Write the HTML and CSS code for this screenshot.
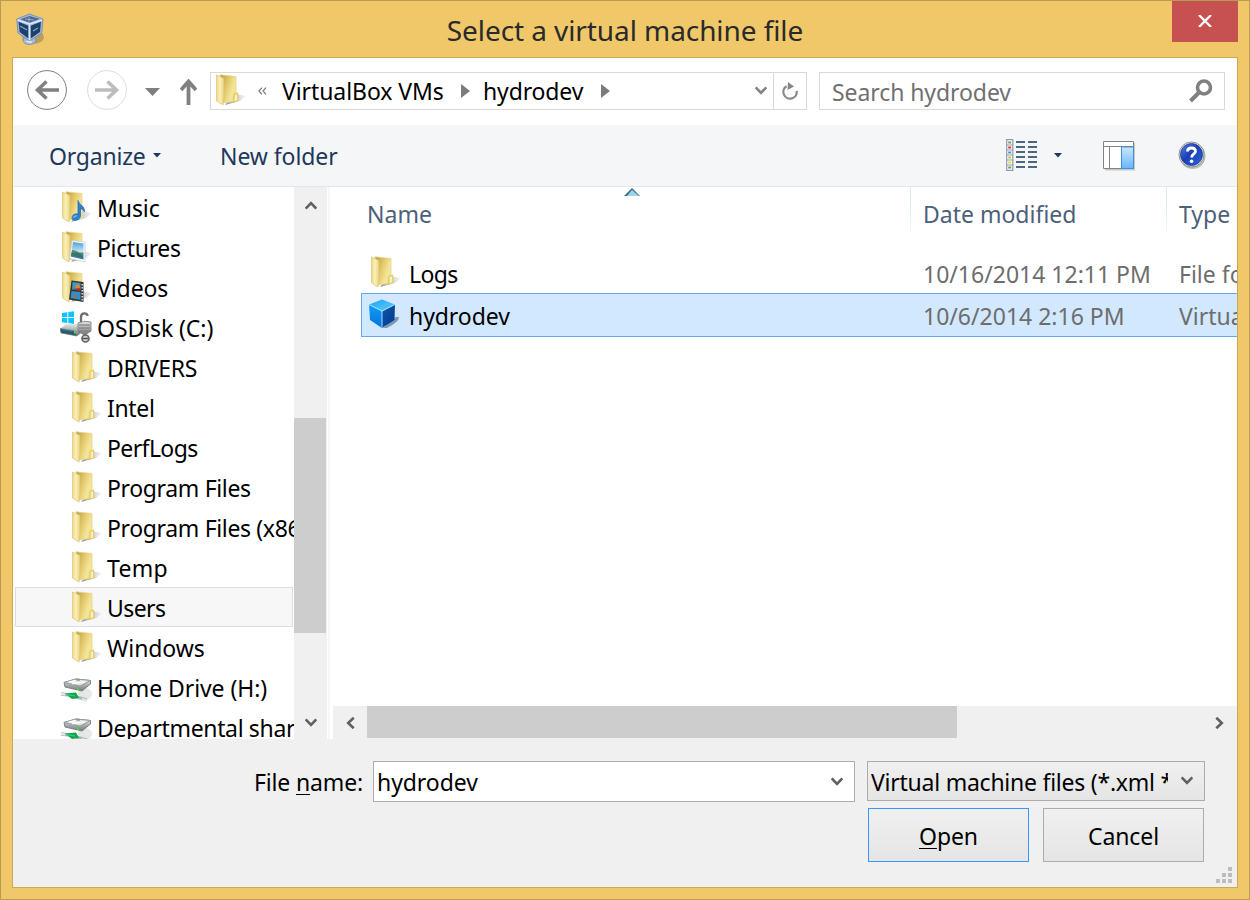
FILE: index.html
```html
<!DOCTYPE html>
<html lang="en">
<head>
<meta charset="utf-8">
<title>Select a virtual machine file</title>
<link rel="stylesheet" href="styles.css">
</head>
<body>
<svg class="defs" width="0" height="0" aria-hidden="true">
  <defs>
    <linearGradient id="coverFill" x1="0" y1="0" x2="1" y2="0"><stop offset="0" stop-color="#eed983"/><stop offset=".45" stop-color="#fbf0b8"/><stop offset="1" stop-color="#ead47f"/></linearGradient>
    <linearGradient id="backFill" gradientUnits="userSpaceOnUse" x1="8" y1="0" x2="21" y2="4"><stop offset="0" stop-color="#c4a548"/><stop offset=".5" stop-color="#e2c868"/><stop offset="1" stop-color="#f4e498"/></linearGradient>
    <linearGradient id="shadowFill" x1="0" y1="0" x2="1" y2="0"><stop offset="0" stop-color="#777" stop-opacity=".85"/><stop offset="1" stop-color="#aaa" stop-opacity=".1"/></linearGradient>
    <linearGradient id="metal" x1="0" y1="0" x2="0" y2="1"><stop offset="0" stop-color="#e4e6e7"/><stop offset="1" stop-color="#72777a"/></linearGradient>
    <linearGradient id="paneFill" x1="0" y1="0" x2="0" y2="1"><stop offset="0" stop-color="#cde6fd"/><stop offset="1" stop-color="#67b5fb"/></linearGradient>
    <linearGradient id="helpFill" x1="0" y1="0" x2="1" y2="1"><stop offset="0" stop-color="#5c83e4"/><stop offset=".45" stop-color="#1b3eb4"/><stop offset="1" stop-color="#2867e0"/></linearGradient>
    <linearGradient id="topFace" x1="0" y1="0" x2="1" y2="1"><stop offset="0" stop-color="#1aa5f4"/><stop offset="1" stop-color="#67cbff"/></linearGradient>
    <linearGradient id="leftFace" x1="0" y1="0" x2="0" y2="1"><stop offset="0" stop-color="#119cf8"/><stop offset="1" stop-color="#0474d8"/></linearGradient>
    <linearGradient id="rightFace" x1="0" y1="0" x2="1" y2="1"><stop offset="0" stop-color="#0b55ab"/><stop offset="1" stop-color="#063b8b"/></linearGradient>
    <linearGradient id="sky" x1="0" y1="0" x2="0" y2="1"><stop offset="0" stop-color="#4d9fdd"/><stop offset=".55" stop-color="#c5e4ee"/><stop offset=".65" stop-color="#4e8a80"/><stop offset="1" stop-color="#2d6fa8"/></linearGradient>
  </defs>
  <symbol id="folder-back" viewBox="0 0 32 32">
    <path d="M20 20L31 22L25 27L10 31z" fill="url(#shadowFill)"/>
    <path d="M5 .7L21 2.500V27L8 29z" fill="url(#backFill)" stroke="#e6d48c" stroke-width=".8"/>
    <path d="M1.500 1L9 4.500V22L8 31L1.500 27z" fill="url(#coverFill)" stroke="#d9c47c" stroke-width=".7"/>
  </symbol>
  <symbol id="folder" viewBox="0 0 32 32">
    <use href="#folder-back" width="32" height="32"/>
    <path d="M19 20L22.800 18.800L23 27L18 28.500z" fill="#f1dc74" stroke="#d5bd59" stroke-width=".6"/>
    <path d="M21 21V26.500" stroke="#fff" stroke-width="1.200"/>
  </symbol>
  <symbol id="music" viewBox="0 0 32 32">
    <use href="#folder-back" width="32" height="32"/>
    <path d="M17 9.500C18 14 24 14.500 23.500 21C22 18.500 20.500 18 19.500 17.500V25C19 30 10.500 31 11 26.500C11.500 23 15 22.500 17 23z" fill="#2f83cd" stroke="#1b65a8" stroke-width=".7"/>
    <path d="M12.500 27Q13 24.500 16 25" fill="none" stroke="#79c1f2" stroke-width="1.200"/>
  </symbol>
  <symbol id="pictures" viewBox="0 0 32 32">
    <use href="#folder-back" width="32" height="32"/>
    <path d="M11 9.500L24 11V31L8.500 27.500z" fill="#fafcfd" stroke="#c3c9cc" stroke-width=".7"/>
    <path d="M12 11L22.500 12.500V28.500L9.700 25.500z" fill="url(#sky)"/>
    <path d="M11 19Q15 18 22 25V27L10.500 24z" fill="#35705d" opacity=".75"/>
  </symbol>
  <symbol id="videos" viewBox="0 0 32 32">
    <use href="#folder-back" width="32" height="32"/>
    <path d="M10.500 9.500L22.500 11V31L8 28.500z" fill="#343331"/>
    <path d="M11.500 11L19.500 12V19L11 18.500z" fill="#369bc5"/><path d="M10.500 20L19.500 21V29L9.500 27z" fill="#318ecb"/>
    <circle cx="16.500" cy="15.500" r="2.300" fill="#e78132"/><path d="M12 18L19 17V20z" fill="#b93122"/><circle cx="14" cy="25" r="1.600" fill="#bd6934"/>
    <path d="M21.200 13V30" stroke="#ddd" stroke-width="1.500" stroke-dasharray="1.500 1.500"/>
  </symbol>
  <symbol id="osdisk" viewBox="0 0 36 34">
    <path d="M2 3L7.300 2.200V7H2zM8.300 2.100L14 1.200V7H8.300zM2 8H7.300V13L2 12.300zM8.300 8H14V14L8.300 13.100z" fill="#08c5ff"/>
    <path d="M0 19L6 14H20V24L17 26L1 23z" fill="url(#metal)"/>
    <path d="M0 18.500L15 21L17 26L1 23z" fill="#2b5968" stroke="#7b8488" stroke-width=".7"/><path d="M2 19.500L12 21.500" stroke="#287fae"/>
    <rect x="14" y="21" width="1.700" height="2.500" fill="#52e43d"/>
    <path d="M21 13V7Q21 3.300 24.500 3.300Q27.500 3.300 27.500 6" fill="none" stroke="#6e6e6e" stroke-width="2.300"/>
    <path d="M18 13Q24 10 31 12V21L25 25L18 22z" fill="url(#metal)" stroke="#777" stroke-width=".8"/>
    <path d="M19 15H30M19 18H30M19 21H30" stroke="#777" stroke-width="1"/>
    <circle cx="25.500" cy="28.500" r="3.500" fill="#d2d2d2" stroke="#676767" stroke-width="1.700"/><path d="M22 28.500H28" stroke="#555" stroke-width="1.500"/>
  </symbol>
  <symbol id="netdrive" viewBox="0 -2 36 34">
    <ellipse cx="25" cy="22" rx="7" ry="6" fill="#bbb" opacity=".35"/>
    <path d="M4 10.500L16 7L30.500 8.500V12L22 19L5 15z" fill="url(#metal)" stroke="#777b7d" stroke-width=".9"/>
    <path d="M4 10.500L16 7L30.500 8.500L20 14z" fill="#e0e2e4" stroke="#8d9194" stroke-width=".8"/>
    <path d="M9 10L17 8.300M12 11.500L25 10" stroke="#fff" stroke-width="1.300"/><path d="M16 8H20" stroke="#777"/>
    <rect x="17" y="15.500" width="2.200" height="2.500" fill="#38dc32"/>
    <path d="M1 22L10 23L27 28" fill="none" stroke="#a8bbc1" stroke-width="3.300"/><path d="M5 21.500L16 20.500L19 26L12 27z" fill="#12a44e"/><path d="M6 22.500L15 24" stroke="#37d474"/>
    <path d="M1 22L5 22.500M22 27L27 28.500" stroke="#e0ebed" stroke-width="2"/>
  </symbol>
  <symbol id="chevron" viewBox="0 0 12 10"><path d="M.7 1.300L6 6.800L11.300 1.300" fill="none" stroke="currentColor" stroke-width="2.600"/></symbol>
</svg>

<div class="window">
  <header class="titlebar">
    <svg class="app-icon" viewBox="0 0 30 34">
      <ellipse cx="17" cy="24" rx="11" ry="7" fill="#65604f" opacity=".4"/><ellipse cx="13.500" cy="27.500" rx="6.500" ry="4" fill="#a7b9d4" stroke="#69799a" stroke-width=".6"/><path d="M10 29L14 26L16 30z" fill="#f1f5fb"/>
      <path d="M.7 6L13.500 1L27 6L25.700 20L13.500 28L2 20z" fill="#9fb9df" stroke="#6c87b0" stroke-width=".8"/>
      <path d="M4.500 6.300L13.500 3L23.500 6L13.500 9.700z" fill="#4b6688"/><path d="M9 6L18 7M13 4V9" stroke="#9eb4d0" stroke-width=".9"/>
      <path d="M2.500 8.700L12.300 12.700V25.500L3.700 19z" fill="#1d416b"/><path d="M14.700 12.700L25 8.700L24 19L14.700 25.500z" fill="#1d416b"/>
      <path d="M4 13L11 17M17 18L22 15" fill="none" stroke="#87a5c8" stroke-width="1.300"/>
      <path d="M1.500 7L13.500 11L26 7M13.500 11V27" fill="none" stroke="#dbe8fb" stroke-width="1.400"/>
    </svg>
    <h1 class="title"><span class="t">Select a virtual machine file</span></h1>
    <button class="close" aria-label="Close"><svg width="14" height="12" viewBox="0 0 14 12"><path d="M1 0L13 12M13 0L1 12" stroke="#fff" stroke-width="2.300"/></svg></button>
  </header>

  <div class="content">
    <nav class="navbar">
      <svg class="back" width="40" height="40" viewBox="0 0 40 40"><circle cx="20" cy="20" r="19.400" fill="none" stroke="#7f7f7f" stroke-width="1"/><path d="M32 20H11M19.500 11.500L10.500 20L19.500 28.500" fill="none" stroke="#808080" stroke-width="3.600"/></svg>
      <svg class="forward" width="40" height="40" viewBox="0 0 40 40"><circle cx="20" cy="20" r="19.400" fill="none" stroke="#dcdcdc" stroke-width="1"/><path d="M8 20H29M20.500 11.500L29.500 20L20.500 28.500" fill="none" stroke="#bdbdbd" stroke-width="3.600"/></svg>
      <svg class="recent" width="15" height="8" viewBox="0 0 15 8"><path d="M0 0H15L7.500 8z" fill="#7f7f7f"/></svg>
      <svg class="up" width="17" height="26" viewBox="0 0 17 26"><path d="M8.500 26V3M1 11L8.500 2.500L16 11" fill="none" stroke="#808080" stroke-width="3.800"/></svg>
      <div class="address">
        <svg class="address-folder" width="32" height="32"><use href="#folder"/></svg>
        <svg class="more" width="9" height="8" viewBox="0 0 9 8"><path d="M4 .7L1 4L4 7.300M8 .7L5 4L8 7.300" fill="none" stroke="#777" stroke-width="1.200"/></svg>
        <span class="t crumb-vms">VirtualBox VMs</span>
        <svg class="arrow" width="9" height="14" viewBox="0 0 9 14"><path d="M0 0L9 7L0 14z" fill="#7b7b7b"/></svg>
        <span class="t crumb-current">hydrodev</span>
        <svg class="arrow" width="9" height="14" viewBox="0 0 9 14"><path d="M0 0L9 7L0 14z" fill="#7b7b7b"/></svg>
        <svg class="history" width="12" height="10"><use href="#chevron"/></svg>
        <div class="refresh"><svg width="18" height="20" viewBox="0 0 18 20"><path d="M5.500 5.200A6.700 6.700 0 1 0 15.700 10" fill="none" stroke="#8a8a8a" stroke-width="2.300"/><path d="M7 1L13 5.500L6.500 9z" fill="#858585"/></svg></div>
      </div>
      <div class="search"><span class="t search-text">Search hydrodev</span><svg width="24" height="24" viewBox="0 0 24 24"><circle cx="15" cy="8.500" r="6.500" fill="none" stroke="#808080" stroke-width="3.600"/><path d="M10.500 13L1.500 22" stroke="#808080" stroke-width="4"/></svg></div>
    </nav>

    <div class="toolbar">
      <span class="t organize">Organize</span>
      <svg class="drop" width="8" height="5" viewBox="0 0 8 5"><path d="M0 0H8L4 4.500z" fill="#1e395b"/></svg>
      <span class="t new-folder">New folder</span>
      <svg class="view-list" width="32" height="32" viewBox="0 0 32 32">
        <path d="M.7 .7H6.800V31.300H.7zM.7 6H6.800M.7 11H6.800M.7 16H6.800M.7 21H6.800M.7 26H6.800" fill="#fff" stroke="#8f9bab" stroke-width="1.200"/>
        <path d="M2.200 2.500h3v2h-3z" fill="#6b9a6f"/><path d="M2.200 7.500h3v2h-3z" fill="#e5332c"/><path d="M2.200 12.500h3v2h-3z" fill="#488bdc"/><path d="M2.200 17.500h3v2h-3z" fill="#aeca45"/><path d="M2.200 22.500h3v2h-3z" fill="#e5d837"/><path d="M2.200 27.500h3v2h-3z" fill="#6b9a6f"/>
        <path d="M10 3H19M22 3H31M10 8H19M22 8H31M10 13H19M22 13H31M10 18H19M22 18H31M10 23H19M22 23H31M10 28H19M22 28H31" stroke="#50657e" stroke-width="2"/>
      </svg>
      <svg class="view-drop" width="8" height="5" viewBox="0 0 8 5"><path d="M0 0H8L4 4.500z" fill="#1e395b"/></svg>
      <svg class="preview" width="33" height="30" viewBox="0 0 33 30"><path d="M2 2H32V29.500H2z" fill="#c8c8c8"/><path d="M.5 .5H30.500V27.500H.5z" fill="#fff" stroke="#838383"/><path d="M.5 5.500H30.500M6.500 5.500V27.500" stroke="#838383"/><path d="M18.500 6H30.500V27.500H18.500z" fill="url(#paneFill)" stroke="#3a91df"/></svg>
      <svg class="help" width="28" height="28" viewBox="0 0 28 28"><circle cx="14.500" cy="15" r="13" fill="#bbb"/><circle cx="13.500" cy="13.500" r="12.500" fill="#eee" stroke="#8d8d8d"/><circle cx="13.500" cy="13.500" r="11" fill="url(#helpFill)" stroke="#19358d" stroke-width=".8"/><path d="M9.500 10.500Q9.500 7 13.500 7Q17.500 7 17.500 10.300C17.500 13 13.700 13 13.700 16.500" fill="none" stroke="#fff" stroke-width="2.800"/><circle cx="13.600" cy="20.300" r="1.800" fill="#fff"/></svg>
    </div>

    <main class="main">
      <ul class="tree">
        <li class="top"><svg class="ic"><use href="#music"/></svg><span class="t">Music</span></li>
        <li class="top"><svg class="ic"><use href="#pictures"/></svg><span class="t snug">Pictures</span></li>
        <li class="top"><svg class="ic"><use href="#videos"/></svg><span class="t">Videos</span></li>
        <li class="top"><svg class="drive"><use href="#osdisk"/></svg><span class="t">OSDisk (C:)</span></li>
        <li><svg class="ic"><use href="#folder"/></svg><span class="t snug">DRIVERS</span></li>
        <li><svg class="ic"><use href="#folder"/></svg><span class="t snug">Intel</span></li>
        <li><svg class="ic"><use href="#folder"/></svg><span class="t tight">PerfLogs</span></li>
        <li><svg class="ic"><use href="#folder"/></svg><span class="t snug">Program Files</span></li>
        <li><svg class="ic"><use href="#folder"/></svg><span class="t snug">Program Files (x86)</span></li>
        <li><svg class="ic"><use href="#folder"/></svg><span class="t wide">Temp</span></li>
        <li class="hover"><svg class="ic"><use href="#folder"/></svg><span class="t tight">Users</span></li>
        <li><svg class="ic"><use href="#folder"/></svg><span class="t">Windows</span></li>
        <li class="top"><svg class="drive"><use href="#netdrive"/></svg><span class="t">Home Drive (H:)</span></li>
        <li class="top"><svg class="drive"><use href="#netdrive"/></svg><span class="t snug">Departmental share</span></li>
      </ul>
      <div class="vscroll">
        <div class="vbutton"><svg class="flip" width="12" height="10"><use href="#chevron"/></svg></div>
        <div class="vtrack"><div class="vthumb"></div></div>
        <div class="vbutton"><svg width="12" height="10"><use href="#chevron"/></svg></div>
      </div>
      <div class="splitter"></div>
      <section class="files">
        <div class="columns">
          <div class="col-name"><span class="t">Name</span><svg class="sort" width="16" height="8" viewBox="0 0 16 8"><path d="M0 8L8 0L16 8z" fill="#3d6e8c"/><path d="M3 8L8 2L15 8z" fill="#9fd2eb"/></svg></div>
          <div class="col-date"><span class="t">Date modified</span></div>
          <div class="col-type"><span class="t">Type</span></div>
        </div>
        <div class="file"><div class="file-name"><svg class="ic"><use href="#folder"/></svg><span class="t tight">Logs</span></div><div class="file-date"><span class="t">10/16/2014 12:11 PM</span></div><div class="file-type"><span class="t">File folder</span></div></div>
        <div class="file selected"><div class="file-name"><svg class="cube" width="32" height="32" viewBox="0 0 32 32"><path d="M14 29L27 18L30 18Q30 23 18 29z" fill="#45627f" opacity=".6"/><path d="M0 5.500L13 .5L26 5.500L13 12.500z" fill="url(#topFace)"/><path d="M0 5.500L13 12.500V29L1 21z" fill="url(#leftFace)"/><path d="M13 12.500L26 5.500L25.500 21L13 29z" fill="url(#rightFace)"/><path d="M0 5.500L13 12L26 5.500M13 12V28.500" fill="none" stroke="#a5defb" stroke-width="1"/></svg><span class="t">hydrodev</span></div><div class="file-date"><span class="t">10/6/2014 2:16 PM</span></div><div class="file-type"><span class="t">VirtualBox</span></div></div>
        <div class="empty"></div>
        <div class="hscroll">
          <div class="hbutton"><svg class="left" width="12" height="10"><use href="#chevron"/></svg></div>
          <div class="htrack"><div class="hthumb"></div></div>
          <div class="hbutton"><svg class="right" width="12" height="10"><use href="#chevron"/></svg></div>
        </div>
      </section>
    </main>

    <footer class="footer">
      <div class="fields">
        <label class="t file-label">File <u>n</u>ame:</label>
        <div class="file-input"><span class="t">hydrodev</span><svg width="12" height="10"><use href="#chevron"/></svg></div>
        <div class="filter"><span class="filter-text"><span class="t filter-value">Virtual machine files (*.xml *.vbox)</span></span><svg width="12" height="10"><use href="#chevron"/></svg></div>
      </div>
      <div class="actions"><button class="button primary"><span class="t open"><u>O</u>pen</span></button><button class="button"><span class="t cancel">Cancel</span></button></div>
      <svg class="grip" width="17" height="17" viewBox="0 0 17 17"><path d="M12 0h4v4h-4zM6 6h4v4h-4zM12 6h4v4h-4zM0 12h4v4h-4zM6 12h4v4h-4zM12 12h4v4h-4z" fill="#bdbdbd"/></svg>
    </footer>
  </div>
</div>
</body>
</html>
```
FILE: styles.css
```css
* { box-sizing: border-box; }
body { margin: 0; width: 1250px; height: 900px; overflow: hidden; font-family: "Noto Sans", "Open Sans", sans-serif; font-size: 23px; color: #000; }
svg { display: block; flex: none; }
.defs { position: absolute; }
.t { white-space: pre; line-height: 32px; letter-spacing: -0.08px; }
.snug { letter-spacing: -0.35px; }
.tight { letter-spacing: -0.6px; }
.wide { letter-spacing: 0.3px; }
button { font: inherit; padding: 0; margin: 0; border: 0; border-radius: 0; color: inherit; }
u { text-decoration-thickness: 1px; text-underline-offset: 3px; }

.window { width: 1250px; height: 900px; background: #f0c869; border: 1px solid #b99b52; padding: 0 11px 11px; display: flex; flex-direction: column; }
.titlebar { height: 56px; flex: none; display: flex; align-items: flex-start; }
.app-icon { width: 30px; height: 34px; margin: 12px 0 0 4px; }
.title { flex: 1; margin: 13px 0 0; padding-left: 32px; font-size: 28px; font-weight: 400; text-align: center; color: #2a2a2a; line-height: 32px; }
.close { width: 66px; height: 41px; background: #c75050; display: flex; justify-content: center; padding-top: 14px; }

.content { flex: 1; border: 1px solid #c9a954; background: #fff; display: flex; flex-direction: column; min-height: 0; overflow: hidden; }
.navbar { height: 67px; flex: none; display: flex; align-items: center; padding: 0 12px 3px 14px; }
.forward { margin-left: 20px; }
.recent { margin: 3px 0 0 18px; }
.up { margin: 3px 0 0 20px; }
.address { margin-left: 13px; margin-top: 2px; width: 597px; height: 38px; border: 1px solid #d9d9d9; display: flex; align-items: center; padding-left: 4px; }
.address-folder { margin-top: -2px; }
.more { margin: -1px 15px 0 11px; }
.crumb-vms { width: 179px; }
.crumb-current { margin-left: 13px; width: 103px; letter-spacing: -0.15px; }
.crumb-current + .arrow { margin-left: 15px; }
.history { margin-left: auto; margin-right: 6px; color: #838383; }
.refresh { width: 33px; height: 36px; border-left: 1px solid #d9d9d9; display: flex; align-items: center; justify-content: center; }
.search { margin: 2px 0 0 12px; width: 406px; height: 38px; border: 1px solid #d9d9d9; padding: 2px 11px 0 12px; display: flex; align-items: center; justify-content: space-between; color: #707070; }
.search svg { margin-top: -3px; }

.toolbar { height: 62px; flex: none; background: #f4f6f8; border-bottom: 1px solid #e4e7e9; display: flex; align-items: center; padding-left: 36px; color: #1e395b; }
.organize { width: 104px; letter-spacing: -0.2px; padding-top: 1px; }
.new-folder { margin-left: 59px; width: 121px; padding-top: 1px; }
.view-list { margin: -2px 0 0 auto; }
.view-drop { margin: 0 41px 0 16px; }
.preview { margin: 0 42px 0 0; }
.help { margin: -1px 31px 0 0; }

.main { height: 552px; flex: none; display: flex; }
.tree { width: 281px; height: 552px; margin: 0; padding: 0; list-style: none; overflow: hidden; flex: none; }
.tree li { height: 40px; display: flex; align-items: center; padding-left: 58px; white-space: nowrap; }
.tree li.top { padding-left: 48px; }
.tree li .t { padding-top: 1px; margin-left: 4px; }
.tree .drive + .t { margin-left: 1px; }
.tree .hover { margin: 0 1px 0 2px; padding-left: 55px; background: #f7f7f7; border: 1px solid #dedede; }
.ic { width: 32px; height: 32px; }
.drive { width: 36px; height: 34px; margin-left: -1px; }
.vscroll { width: 33px; background: #f0f0f0; display: flex; flex-direction: column; flex: none; }
.vbutton { height: 34px; display: flex; justify-content: center; align-items: center; color: #606060; padding: 1px 0 0; }
.vtrack { flex: 1; padding: 197px 1px 0 0; }
.vthumb { height: 215px; background: #cdcdcd; }
.flip { transform: rotate(180deg); }
.splitter { width: 6px; border-left: 1px solid #fff; border-right: 3px solid #fff; background: #f7f7f7; flex: none; }
.files { flex: 1; min-width: 0; display: flex; flex-direction: column; overflow: hidden; }
.columns { height: 48px; margin-bottom: 18px; display: flex; color: #4c607a; flex: none; }
.columns > div { padding-top: 11px; }
.columns .t, .file-date .t, .file-type .t { letter-spacing: 0; }
.col-name { width: 577px; padding-left: 34px; position: relative; }
.sort { position: absolute; left: 291px; top: 1px; }
.col-date, .col-type { border-left: 1px solid; border-image: linear-gradient(#d9e7f7, #e6effa 70%, #fff) 1; padding-left: 12px; }
.col-date { width: 256px; }
.col-type { width: 71px; }
.file { height: 40px; margin-left: 28px; display: flex; align-items: center; flex: none; white-space: nowrap; color: #6d6d6d; }
.file > div { overflow: hidden; height: 100%; display: flex; align-items: center; }
.file .t { padding-top: 2px; }
.file-name { width: 562px; padding-left: 9px; color: #000; }
.file-name .t { margin-left: 7px; }
.file-name .ic { margin-top: -2px; }
.file-date { width: 256px; }
.file-type { width: 58px; }
.selected { height: 44px; background: #d1e8ff; border: 1px solid #66a7e8; border-right: 0; }
.selected .file-name { width: 561px; padding-left: 7px; }
.selected .file-name .t { margin-left: 8px; }
.cube { margin-top: -1px; }
.empty { flex: 1; min-height: 0; }
.hscroll { height: 33px; background: #f0f0f0; display: flex; flex: none; }
.hbutton { width: 34px; display: flex; align-items: center; justify-content: center; color: #606060; }
.left { transform: rotate(90deg); }
.right { transform: rotate(-90deg); }
.htrack { flex: 1; }
.hthumb { width: 590px; height: 32px; background: #cdcdcd; }

.footer { flex: 1; background: #f0f0f0; padding-top: 22px; position: relative; }
.fields { display: flex; align-items: flex-start; }
.file-label { margin: 5px 0 0; width: 360px; padding-left: 241px; letter-spacing: -0.15px; }
.file-input { width: 482px; height: 41px; background: #fff; border: 1px solid #acacac; padding: 0 11px 0 3px; display: flex; align-items: center; justify-content: space-between; }
.file-input .t, .filter .t { padding-top: 1px; display: block; }
.filter { margin-left: 12px; width: 338px; height: 40px; border: 1px solid #acacac; background: linear-gradient(#f0f0f0, #e5e5e5); padding: 0 11px 0 3px; display: flex; align-items: center; justify-content: space-between; }
.filter svg, .file-input svg { color: #606060; }
.filter-text { width: 297px; overflow: hidden; }
.filter-value { letter-spacing: -0.24px; }
.actions { display: flex; gap: 14px; margin: 6px 0 0 855px; }
.button { width: 161px; height: 54px; border: 1px solid #acacac; background: linear-gradient(#f0f0f0, #e5e5e5); display: flex; align-items: center; justify-content: center; padding-top: 2px; }
.primary { border-color: #3399ff; }
.grip { position: absolute; right: 4px; bottom: 3px; }
```
